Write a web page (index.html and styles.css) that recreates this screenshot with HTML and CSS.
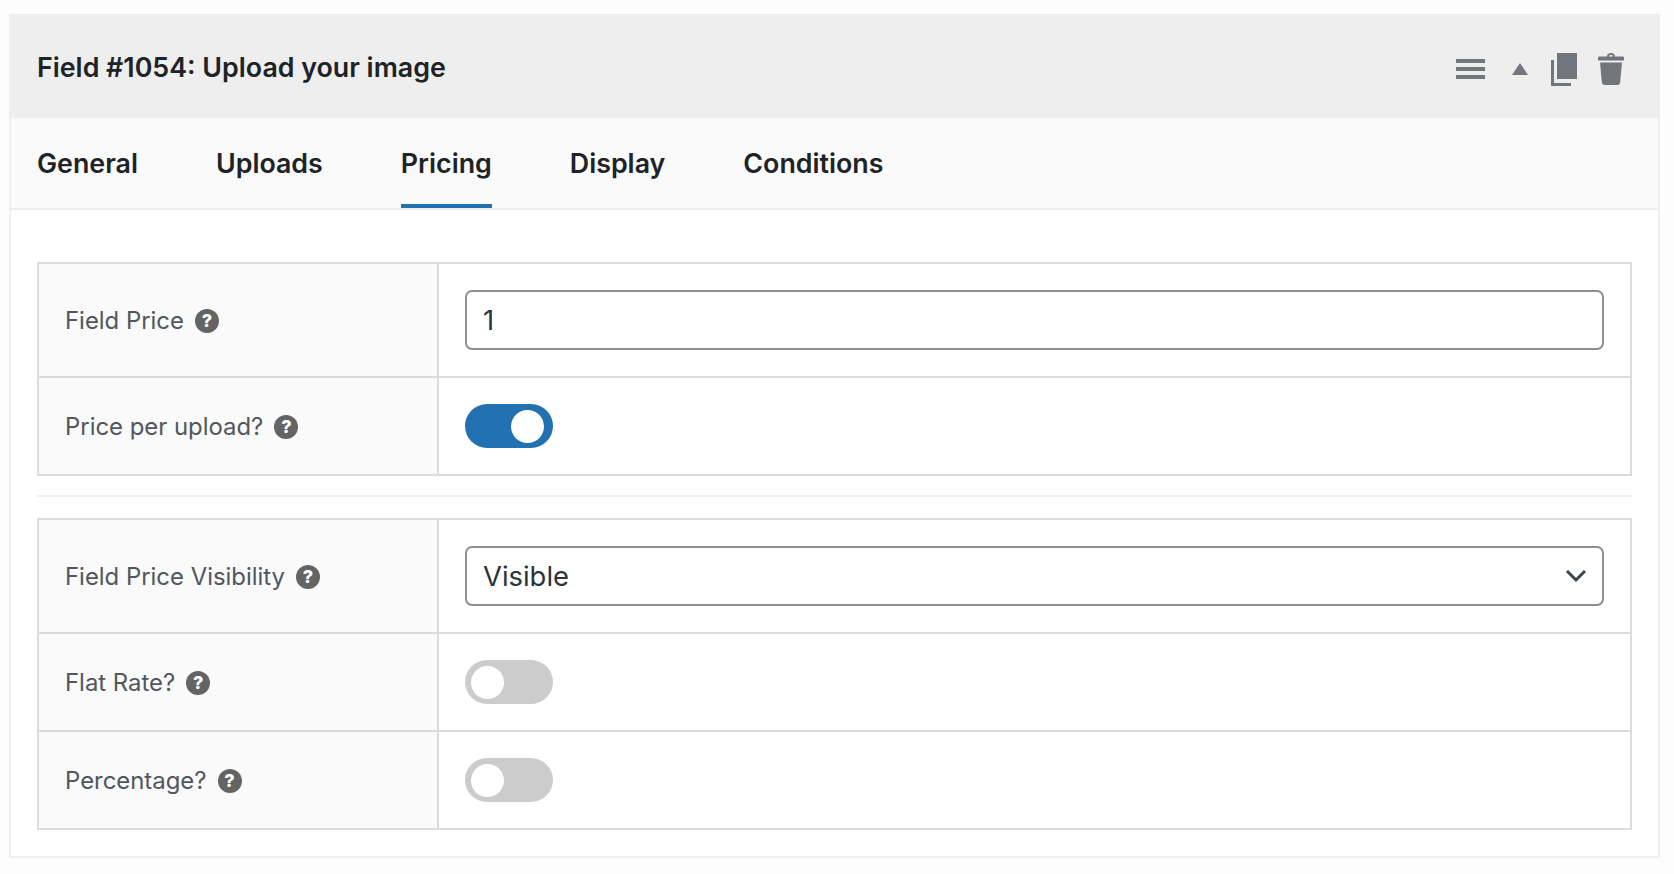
FILE: index.html
```html
<!DOCTYPE html>
<html lang="en">
<head>
<meta charset="utf-8">
<title>Field #1054</title>
<link rel="stylesheet" href="styles.css">
</head>
<body>
<section class="card">
  <header class="card-head">
    <h2 class="card-title">Field #1054: Upload your image</h2>
    <div class="actions">
      <svg class="ico ico-menu" viewBox="0 0 29 20" width="29" height="20"><path d="M0 0h29v4H0zM0 8h29v4H0zM0 16h29v4H0z"/></svg>
      <svg class="ico ico-up" viewBox="0 0 16 12" width="16" height="12"><path d="M8 0l8 12H0z"/></svg>
      <svg class="ico ico-copy" viewBox="0 0 26 33" width="26" height="33"><path d="M6 0h20v26H6z"/><path d="M0 7h3v23h17v3H0z"/></svg>
      <svg class="ico ico-trash" viewBox="0 0 26 32" width="26" height="32"><path d="M9 3.500C9 1.500 10.500 0 13 0s4 1.500 4 3.500h7.500c1 0 1.500.5 1.500 1.500v2.500H0V5c0-1 .5-1.500 1.500-1.500zM11 3.500h4C15 2.500 14.200 2 13 2s-2 .5-2 1.500z"/><path d="M2 9.500h22l-1.800 19.500c-.2 2-1.200 3-3.200 3H7c-2 0-3-1-3.200-3z"/></svg>
    </div>
  </header>
  <nav class="tabs">
    <a class="tab">General</a>
    <a class="tab">Uploads</a>
    <a class="tab is-active">Pricing</a>
    <a class="tab">Display</a>
    <a class="tab">Conditions</a>
  </nav>
  <div class="card-body">
    <div class="group">
      <div class="row">
        <div class="label">Field Price <span class="help">?</span></div>
        <div class="value"><input class="control" type="text" value="1"></div>
      </div>
      <div class="row">
        <div class="label">Price per upload? <span class="help">?</span></div>
        <div class="value"><div class="toggle is-on"><span class="knob"></span></div></div>
      </div>
    </div>
    <hr class="divider">
    <div class="group">
      <div class="row">
        <div class="label">Field Price Visibility <span class="help">?</span></div>
        <div class="value">
          <div class="select-wrap">
            <select class="control select"><option>Visible</option></select>
            <svg class="chevron" viewBox="0 0 22 14" width="22" height="14"><path d="M2 2l9 9 9-9" fill="none" stroke="#3c434a" stroke-width="3"/></svg>
          </div>
        </div>
      </div>
      <div class="row">
        <div class="label">Flat Rate? <span class="help">?</span></div>
        <div class="value"><div class="toggle"><span class="knob"></span></div></div>
      </div>
      <div class="row">
        <div class="label">Percentage? <span class="help">?</span></div>
        <div class="value"><div class="toggle"><span class="knob"></span></div></div>
      </div>
    </div>
  </div>
</section>
</body>
</html>
```
FILE: styles.css
```css
* { box-sizing: border-box; }
html, body { margin: 0; padding: 0; }
body {
  background: #fdfdfd;
  padding: 14px 14px 0 9px;
  font-family: Inter, "Liberation Sans", sans-serif;
  color: #1d2327;
}
.card {
  background: #fff;
  border: 2px solid #f0f0f1;
  border-top: 0;
}
.card-head {
  display: flex;
  align-items: center;
  justify-content: space-between;
  height: 104px;
  margin: 0 -2px;
  padding: 2px 36px 0 28px;
  background: #eeeeee;
}
.card-title {
  margin: 0;
  font-size: 26.8px;
  font-weight: 630;
  line-height: 32px;
}
.actions { display: flex; align-items: center; padding-top: 4px; }
.ico { display: block; fill: #72767c; }
.ico-up { margin-left: 27px; }
.ico-copy { margin-left: 23px; }
.ico-trash { margin-left: 21px; }
.tabs {
  display: flex;
  gap: 78px;
  height: 92px;
  padding-left: 26px;
  background: #fafafa;
  border-bottom: 2px solid #ececec;
}
.tab {
  display: flex;
  align-items: center;
  height: 90px;
  padding-top: 4px;
  font-size: 26.8px;
  font-weight: 630;
  border-bottom: 4px solid transparent;
}
.tab.is-active { border-bottom-color: #2271b1; }
.card-body { padding: 52px 26px 26px; }
.group {
  border: 2px solid #dcdcde;
}
.row {
  display: grid;
  grid-template-columns: 400px 1fr;
  border-bottom: 2px solid #dcdcde;
}
.row:last-child { border-bottom: 0; }
.label {
  display: flex;
  align-items: center;
  gap: 11px;
  padding-left: 26px;
  background: #fafafa;
  border-right: 2px solid #dcdcde;
  font-size: 23.9px;
  color: #50575e;
}
.value { padding: 26px; }
.help {
  display: inline-flex;
  align-items: center;
  justify-content: center;
  width: 24px;
  height: 24px;
  margin-top: 2px;
  border-radius: 50%;
  background: #646464;
  color: #fff;
  font-size: 18px;
  font-weight: 800;
  line-height: 1;
}
.control {
  display: block;
  width: 100%;
  height: 60px;
  padding: 0 16px;
  border: 2px solid #8c8f94;
  border-radius: 7px;
  background: #fff;
  color: #2c3338;
  font-family: inherit;
  font-size: 27.4px;
  outline: 0;
}
.select { appearance: none; }
.select-wrap { position: relative; }
.chevron { position: absolute; right: 17px; top: 23px; }
.toggle {
  display: flex;
  align-items: center;
  width: 88px;
  height: 44px;
  padding: 0 6px;
  border-radius: 22px;
  background: #cccccc;
}
.toggle.is-on { justify-content: flex-end; padding: 0 9px; background: #2271b1; }
.knob {
  display: block;
  width: 33px;
  height: 33px;
  border-radius: 50%;
  background: #fff;
}
.divider {
  height: 2px;
  margin: 19px 0 21px;
  border: 0;
  background: #f0f0f1;
}
```
